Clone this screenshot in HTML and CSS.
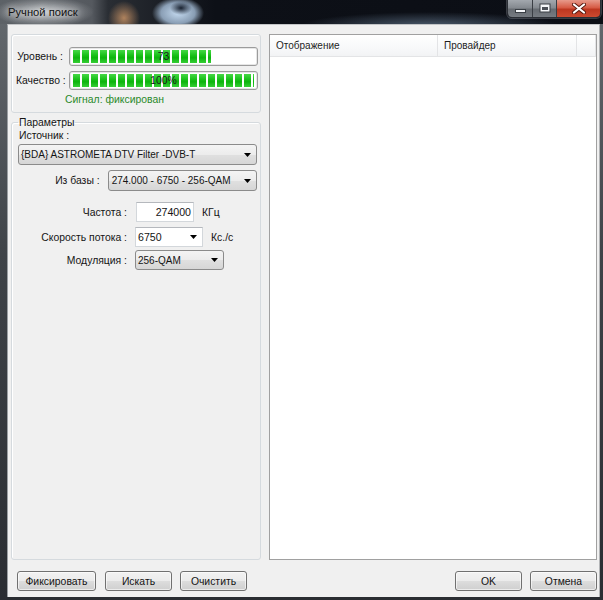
FILE: index.html
```html
<!DOCTYPE html>
<html lang="ru">
<head>
<meta charset="utf-8">
<title>Ручной поиск</title>
<link rel="stylesheet" href="styles.css">
</head>
<body>
<div class="window">
  <div class="titlebar">
    <span class="title">Ручной поиск</span>
    <div class="caption">
      <span class="cbtn cmin"><svg width="11" height="4" viewBox="0 0 11 4"><rect x="0.5" y="0.5" width="10" height="3" fill="#f4f6f8" stroke="#3a3f45"/></svg></span>
      <span class="cbtn cmax"><svg width="12" height="10" viewBox="0 0 12 10"><rect x="0.5" y="0.5" width="11" height="9" fill="#3a3f45"/><rect x="1.5" y="1.5" width="9" height="7" fill="#f4f6f8"/><rect x="3" y="4" width="6" height="3" fill="#4a4f56"/></svg></span>
      <span class="cbtn cclose"><svg width="14" height="11" viewBox="0 0 14 11"><path d="M2 1.5 L12 9.5 M12 1.5 L2 9.5" stroke="#5a1a10" stroke-width="4" stroke-linecap="round"/><path d="M2 1.5 L12 9.5 M12 1.5 L2 9.5" stroke="#ffffff" stroke-width="2.2" stroke-linecap="round"/></svg></span>
    </div>
  </div>
  <div class="frame">
    <div class="client">
      <div class="main">
        <div class="left">
          <div class="group signal-group">
            <div class="meters">
              <span class="lbl">Уровень :</span>
              <div class="progress"><div class="fill" style="width:76%"></div><span class="ptext">73</span></div>
              <span class="lbl">Качество :</span>
              <div class="progress"><div class="fill" style="width:100%"></div><span class="ptext">100%</span></div>
            </div>
            <div class="signal-status">Сигнал: фиксирован</div>
          </div>
          <fieldset class="params">
            <legend>Параметры</legend>
            <div class="params-body">
              <div class="caption-line">Источник :</div>
              <div class="combo source"><span>{BDA} ASTROMETA DTV Filter -DVB-T</span><svg class="arr" width="7" height="4" viewBox="0 0 7 4"><path d="M0 0H7L3.5 4Z"/></svg></div>
              <div class="row row-base">
                <span class="lbl base-lbl">Из базы :</span>
                <div class="combo base"><span>274.000 - 6750 - 256-QAM</span><svg class="arr" width="7" height="4" viewBox="0 0 7 4"><path d="M0 0H7L3.5 4Z"/></svg></div>
              </div>
              <div class="row row-freq">
                <span class="lbl wide-lbl">Частота :</span>
                <div class="textbox freq">274000</div>
                <span class="unit">КГц</span>
              </div>
              <div class="row row-rate">
                <span class="lbl wide-lbl">Скорость потока :</span>
                <div class="combo editable rate"><span>6750</span><svg class="arr" width="7" height="4" viewBox="0 0 7 4"><path d="M0 0H7L3.5 4Z"/></svg></div>
                <span class="unit">Кс./с</span>
              </div>
              <div class="row row-mod">
                <span class="lbl wide-lbl">Модуляция :</span>
                <div class="combo mod"><span>256-QAM</span><svg class="arr" width="7" height="4" viewBox="0 0 7 4"><path d="M0 0H7L3.5 4Z"/></svg></div>
              </div>
            </div>
          </fieldset>
        </div>
        <div class="listview">
          <div class="lv-header">
            <div class="lv-col col-name">Отображение</div>
            <div class="lv-col col-prov">Провайдер</div>
            <div class="lv-col col-rest"></div>
          </div>
          <div class="lv-body"></div>
        </div>
      </div>
      <div class="buttons">
        <div class="btns-left">
          <button class="btn btn-fix">Фиксировать</button>
          <button class="btn">Искать</button>
          <button class="btn">Очистить</button>
        </div>
        <div class="btns-right">
          <button class="btn">OK</button>
          <button class="btn">Отмена</button>
        </div>
      </div>
    </div>
  </div>
</div>
</body>
</html>
```
FILE: styles.css
```css
* { box-sizing: border-box; }
html, body { margin: 0; padding: 0; background: #1a1d22; }
body {
  font-family: "Liberation Sans", Arial, sans-serif;
  font-size: 10.4px;
  color: #141414;
}
.window {
  width: 603px;
  height: 600px;
  display: grid;
  grid-template-rows: 24px 1fr;
  overflow: hidden;
}

/* ---------- title bar ---------- */
.titlebar {
  display: flex;
  align-items: flex-start;
  background:
    radial-gradient(50px 15px at 44px 12px, rgba(220,223,226,0.8), rgba(220,223,226,0)),
    radial-gradient(16px 17px at 124px 18px, rgba(190,140,98,0.9), rgba(190,140,98,0)),
    radial-gradient(11px 7px at 181px 8px, rgba(16,24,38,0.95), rgba(16,24,38,0)),
    radial-gradient(26px 16px at 178px 13px, rgba(196,218,240,1), rgba(176,202,230,0.75) 65%, rgba(176,202,230,0)),
    radial-gradient(130px 14px at 430px 26px, rgba(86,104,124,0.85), rgba(86,104,124,0)),
    linear-gradient(90deg, #5d6267 0, #55595f 92px, #2a2e34 108px, #0d1017 215px, #0b0e15 100%);
}
.title {
  padding-left: 8px;
  line-height: 24px;
  font-size: 11.2px;
  color: #111;
  text-shadow: 0 0 6px rgba(255,255,255,0.8), 0 0 10px rgba(255,255,255,0.6);
}
.caption {
  margin-left: auto;
  margin-right: 2px;
  display: flex;
  height: 18px;
  border: 1px solid #2b2f35;
  border-top: 0;
  border-radius: 0 0 5px 5px;
  overflow: hidden;
  box-shadow: 0 0 0 1px rgba(200,205,210,0.25);
}
.cbtn {
  display: flex;
  justify-content: center;
  align-items: flex-start;
  height: 100%;
}
.cmin, .cmax {
  width: 25px;
  background: linear-gradient(#a3a8ae 0, #858a90 45%, #676c72 55%, #767b81 100%);
  border-right: 1px solid #3a3e44;
}
.cmin { padding-top: 9px; }
.cmax { padding-top: 3px; width: 24px; }
.cclose {
  width: 43px;
  padding-top: 3px;
  background: linear-gradient(#e79a8b 0, #d65b45 45%, #bd3720 55%, #cc4a30 100%);
}

/* ---------- frame / client ---------- */
.frame {
  padding: 0 3px 3px 7px;
  background: linear-gradient(#62676c, #3f4348 40%, #2a2d32);
}
.client {
  height: 100%;
  background: #f0f0f0;
  border-top: 1px solid #c3c5c7;
  border-left: 1px solid #9a9ea2;
  border-right: 1px solid #b3b5b7;
  padding: 9px 2px 6px 3px;
  display: grid;
  grid-template-rows: 1fr auto;
  row-gap: 11px;
}
.main {
  display: grid;
  grid-template-columns: 250px 1fr;
  column-gap: 8px;
  min-height: 0;
}
.left {
  display: flex;
  flex-direction: column;
}

/* ---------- signal group ---------- */
.group {
  border: 1px solid #d5dade;
  border-radius: 3px;
  box-shadow: inset 1px 1px 0 #fff;
}
.signal-group {
  height: 79px;
  padding: 12px 2px 0 4px;
}
.meters {
  display: grid;
  grid-template-columns: 47px 189px;
  column-gap: 6px;
  row-gap: 5px;
  align-items: center;
}
.lbl { white-space: nowrap; }
.meters .lbl { text-align: right; }
.progress {
  height: 19px;
  border: 1px solid #9c9c9c;
  border-radius: 3px;
  background: #fff;
  padding: 2px 3px;
  display: grid;
  box-shadow: inset 0 0 0 1px #e6e6e6;
}
.progress > * { grid-area: 1 / 1; }
.fill {
  height: 100%;
  justify-self: start;
  background:
    repeating-linear-gradient(90deg, transparent 0 7px, #fff 7px 9px),
    linear-gradient(#46d846 0, #16bf16 45%, #0eb40e 60%, #35cf35 100%);
}
.ptext {
  justify-self: center;
  align-self: center;
  line-height: 13px;
  color: #1c1c1c;
}
.signal-status {
  padding-left: 49px;
  margin-top: 3px;
  line-height: 13px;
  color: #2a8a2a;
}

/* ---------- params fieldset ---------- */
.params {
  margin: 3px 0 0 0;
  padding: 0;
  min-width: 0;
  flex: 1;
  border: 1px solid #d5dade;
  border-radius: 3px;
  box-shadow: inset 1px 1px 0 #fff;
}
.params legend {
  padding: 0 1px;
  margin-left: 6px;
  line-height: 13px;
}
.params-body {
  padding: 0 3px 0 6px;
}
.caption-line {
  line-height: 13px;
  padding-left: 1px;
}
.combo {
  display: flex;
  align-items: center;
  justify-content: space-between;
  height: 21px;
  padding: 0 5px 0 2px;
  border: 1px solid #8b8b8b;
  border-radius: 3px;
  background: linear-gradient(#f4f4f4 0, #ececec 50%, #e0e0e0 51%, #d6d6d6 100%);
  white-space: nowrap;
  font-size: 10px;
}
.combo .arr { flex: none; fill: #000; }
.combo.source { margin-top: 2px; width: 239px; }
.row {
  display: flex;
  align-items: center;
  column-gap: 8px;
}
.row-base { margin-top: 5px; }
.base-lbl { width: 82px; text-align: right; }
.combo.base { width: 150px; padding-left: 3px; }
.wide-lbl { width: 109px; text-align: right; }
.row-freq { margin-top: 11px; }
.textbox {
  height: 20px;
  line-height: 18px;
  border: 1px solid #d3d7db;
  border-top-color: #b5b8bd;
  background: #fff;
  text-align: right;
  padding: 0 2px;
  font-size: 10.6px;
}
.freq { width: 58px; margin-left: 1px; }
.row-rate { margin-top: 5px; }
.combo.editable {
  height: 20px;
  border-radius: 0;
  border: 1px solid #d3d7db;
  border-top-color: #b5b8bd;
  background: #fff;
  padding-left: 2px;
  padding-right: 5px;
  font-size: 10.6px;
}
.combo.rate { width: 68px; }
.row-mod { margin-top: 3px; }
.combo.mod { width: 89px; height: 20px; }

/* ---------- list view ---------- */
.listview {
  border: 1px solid #a0a0a0;
  background: #fff;
  display: flex;
  flex-direction: column;
  min-height: 0;
}
.lv-header {
  display: flex;
  height: 22px;
  border-bottom: 1px solid #e3e4e6;
  background: linear-gradient(#ffffff, #f8f9fa 60%, #f2f3f5);
}
.lv-col {
  line-height: 21px;
  padding-left: 6px;
  border-right: 1px solid #e3e4e6;
  white-space: nowrap;
  color: #1e1e1e;
  font-size: 10px;
}
.col-name { width: 168px; }
.col-prov { width: 139px; }
.col-rest { width: 19px; }
.lv-body { flex: 1; }

/* ---------- buttons ---------- */
.buttons {
  display: flex;
  justify-content: space-between;
  height: 20px;
}
.btns-left, .btns-right {
  display: flex;
  column-gap: 8px;
}
.btns-left { padding-left: 6px; }
.btn {
  font: inherit;
  color: #141414;
  height: 20px;
  width: 67px;
  padding: 0;
  border: 1px solid #707070;
  border-radius: 3px;
  background: linear-gradient(#f2f2f2 0, #ebebeb 50%, #dddddd 51%, #cfcfcf 100%);
  box-shadow: inset 0 0 0 1px rgba(255,255,255,0.6);
}
.btn-fix { width: 79px; margin-right: 1px; }
```
